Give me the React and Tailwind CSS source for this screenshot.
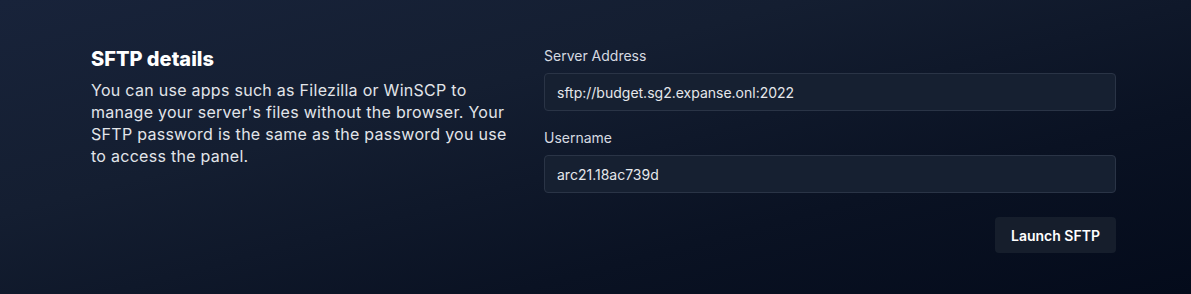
export default function App() {
  return (
    <div
      className="w-full h-[294px] overflow-hidden bg-[linear-gradient(165deg,#18233a_0%,#141e31_35%,#0a1223_70%,#040b1b_100%)]"
      style={{ fontFamily: "Inter, 'Noto Sans', sans-serif" }}
    >
      <div className="flex pt-[45px] pl-[91px]">
        <div className="w-[424px]">
          <h2 className="text-[20px] leading-[28px] font-extrabold text-white tracking-[0px]">
            SFTP details
          </h2>
          <p className="mt-[6px] text-[16px] leading-[22px] tracking-[0.28px] text-[#e2e5ea]">
            You can use apps such as Filezilla or WinSCP to manage your server's files without the browser. Your SFTP password is the same as the password you use to access the panel.
          </p>
        </div>
        <div className="ml-[29px] mt-[1px] w-[572px] flex flex-col">
          <label className="text-[14px] leading-[20px] text-[#d6dae1]">Server Address</label>
          <div className="mt-[7px] h-[38px] flex items-center px-3 rounded-[4px] border border-[#2a3446] bg-[#162031] text-[14px] text-[#e5e7eb]">
            sftp://budget.sg2.expanse.onl:2022
          </div>
          <label className="mt-[17px] text-[14px] leading-[20px] text-[#d6dae1]">Username</label>
          <div className="mt-[7px] h-[38px] flex items-center px-3 rounded-[4px] border border-[#2a3446] bg-[#162031] text-[14px] text-[#e5e7eb]">
            arc21.18ac739d
          </div>
          <div className="mt-[24px] flex justify-end">
            <button className="h-[36px] w-[121px] rounded-[4px] bg-[#161e2c] text-[14px] font-semibold text-white">
              Launch SFTP
            </button>
          </div>
        </div>
      </div>
    </div>
  );
}
